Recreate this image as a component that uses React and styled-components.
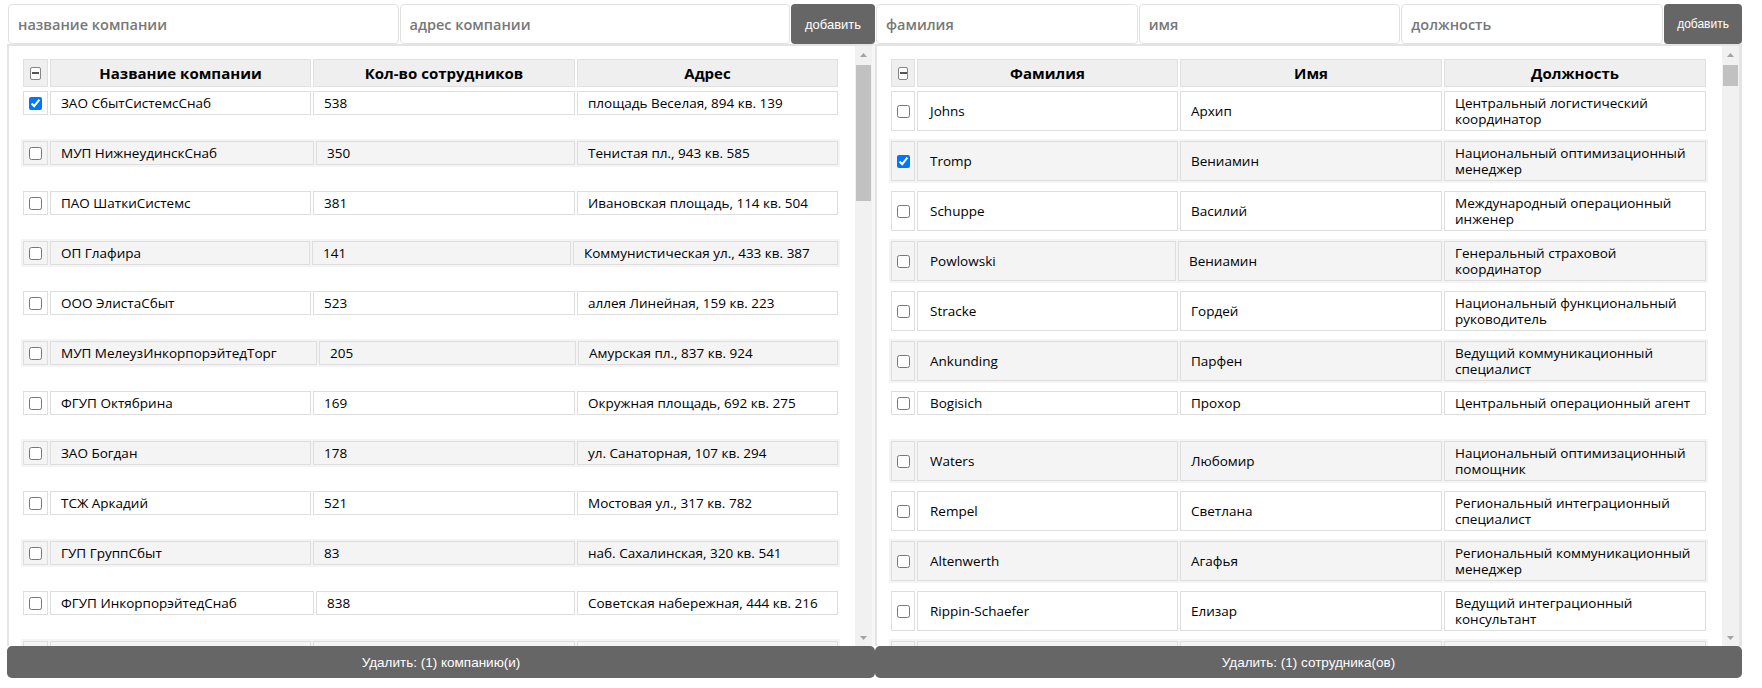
import React from 'react';
import styled, { createGlobalStyle } from 'styled-components';

const GlobalStyle = createGlobalStyle`
  body {
    margin: 0;
    background: #fff;
    font-family: 'Open Sans', 'Noto Sans', sans-serif;
    color: #000;
  }
`

const Page = styled.div`
  display: flex;
  padding: 4px 0 0 7px;
`
const Section = styled.div`
  width: ${p => p.$width}px;
  display: flex;
  flex-direction: column;
`
const Form = styled.form`
  display: flex;
  height: 40px;
  padding-left: 1px;
`
const Input = styled.input`
  flex: 1;
  min-width: 0;
  height: 40px;
  box-sizing: border-box;
  margin: 0 1px 0 0;
  border: 1px solid #e2e2e2;
  border-radius: 4px;
  padding: 0 9px;
  font: 600 14.5px 'Open Sans', sans-serif;
  outline: none;
  &::placeholder {
    color: #777;
  }
`
const AddButton = styled.button`
  width: ${p => p.$width}px;
  flex: none;
  border: none;
  border-radius: 4px;
  background: #666;
  color: #fff;
  font: ${p => p.$size}px 'Liberation Sans', Arial, sans-serif;
  padding: 0;
`
const Panel = styled.div`
  height: 602px;
  box-sizing: border-box;
  display: flex;
  border: 2px solid #e4e4e4;
  border-bottom: none;
  border-right: 3px solid ${p => (p.$last ? '#e4e4e4' : '#f7f7f7')};
  overflow: hidden;
`
const Content = styled.div`
  flex: 1;
  overflow: hidden;
  padding: 11px 0 0 12px;
`
const RowTable = styled.div`
  display: grid;
  grid-template-columns: ${p => p.$cols};
  gap: 2px;
  padding: 2px;
  width: max-content;
  background: ${p => (p.$alt ? '#f4f4f4' : '#fff')};
`
const Slot = styled.div`
  height: 50px;
`
const Cell = styled.div`
  border: 1px solid #dedede;
  background: ${p => (p.$alt ? '#f4f4f4' : '#fff')};
  padding: 3px 10px 3px ${p => p.$pad}px;
  min-height: 16px;
  font-size: 13.5px;
  line-height: 16px;
  display: flex;
  align-items: center;
  white-space: pre-line;
`
const CheckCell = styled(Cell)`
  padding: 0;
  justify-content: center;
`
const HeadCell = styled.div`
  border: 1px solid #e0e0e0;
  background: #efefef;
  padding: 3px 6px;
  font-size: 15px;
  font-weight: 700;
  line-height: 20px;
  text-align: center;
  display: flex;
  align-items: center;
  justify-content: center;
`
const Check = styled.input`
  margin: 0;
  width: 13px;
  height: 13px;
`
const Mixed = styled.span`
  width: 11px;
  height: 11px;
  border: 1px solid #858585;
  border-radius: 2px;
  background: #fff;
  display: flex;
  align-items: center;
  justify-content: center;
  &::after {
    content: '';
    width: 7px;
    height: 1.5px;
    background: #555;
  }
`
const Scrollbar = styled.div`
  width: 17px;
  flex: none;
  background: #f1f1f1;
  display: flex;
  flex-direction: column;
`
const Arrow = styled.div`
  height: 17px;
  flex: none;
  display: flex;
  align-items: center;
  justify-content: center;
`
const Thumb = styled.div`
  height: ${p => p.$h}px;
  margin: 2px 1px 0;
  background: #c1c1c1;
`
const Track = styled.div`
  flex: 1;
`
const DeleteButton = styled.button`
  height: 32px;
  border: none;
  border-radius: 5px;
  background: #666;
  color: #fff;
  font: 13.5px 'Liberation Sans', Arial, sans-serif;
  padding: 0;
`

const LEFT = '25px 261px 262px 261px'
const RIGHT = '24px 261px 262px 262px'

// column widths per row follow the reference, where every row is its own table
const companies = [
  { cells: ['ЗАО СбытСистемсСнаб', '538', 'площадь Веселая, 894 кв. 139'], checked: true },
  { cells: ['МУП НижнеудинскСнаб', '350', 'Тенистая пл., 943 кв. 585'], cols: '25px 264px 259px 261px' },
  { cells: ['ПАО ШаткиСистемс', '381', 'Ивановская площадь, 114 кв. 504'] },
  { cells: ['ОП Глафира', '141', 'Коммунистическая ул., 433 кв. 387'], cols: '25px 260px 259px 265px' },
  { cells: ['ООО ЭлистаСбыт', '523', 'аллея Линейная, 159 кв. 223'] },
  { cells: ['МУП МелеузИнкорпорэйтедТорг', '205', 'Амурская пл., 837 кв. 924'], cols: '25px 267px 257px 260px' },
  { cells: ['ФГУП Октябрина', '169', 'Окружная площадь, 692 кв. 275'] },
  { cells: ['ЗАО Богдан', '178', 'ул. Санаторная, 107 кв. 294'] },
  { cells: ['ТСЖ Аркадий', '521', 'Мостовая ул., 317 кв. 782'] },
  { cells: ['ГУП ГруппСбыт', '83', 'наб. Сахалинская, 320 кв. 541'] },
  { cells: ['ФГУП ИнкорпорэйтедСнаб', '838', 'Советская набережная, 444 кв. 216'], cols: '25px 264px 259px 261px' },
  { cells: ['', '', ''] },
]

const employees = [
  { cells: ['Johns', 'Архип', 'Центральный логистический\nкоординатор'] },
  { cells: ['Tromp', 'Вениамин', 'Национальный оптимизационный\nменеджер'], checked: true },
  { cells: ['Schuppe', 'Василий', 'Международный операционный\nинженер'] },
  { cells: ['Powlowski', 'Вениамин', 'Генеральный страховой\nкоординатор'], cols: '24px 259px 264px 262px' },
  { cells: ['Stracke', 'Гордей', 'Национальный функциональный\nруководитель'] },
  { cells: ['Ankunding', 'Парфен', 'Ведущий коммуникационный\nспециалист'] },
  { cells: ['Bogisich', 'Прохор', 'Центральный операционный агент'] },
  { cells: ['Waters', 'Любомир', 'Национальный оптимизационный\nпомощник'] },
  { cells: ['Rempel', 'Светлана', 'Региональный интеграционный\nспециалист'] },
  { cells: ['Altenwerth', 'Агафья', 'Региональный коммуникационный\nменеджер'] },
  { cells: ['Rippin-Schaefer', 'Елизар', 'Ведущий интеграционный\nконсультант'] },
  { cells: ['', '', ''] },
]

const Tri = ({ down }) => (
  <svg width="7" height="4" viewBox="0 0 7 4">
    <path d={down ? 'M0 0H7L3.5 4Z' : 'M0 4H7L3.5 0Z'} fill="#a3a3a3" />
  </svg>
)

const ScrollTrack = ({ thumb }) => (
  <Scrollbar>
    <Arrow><Tri /></Arrow>
    <Thumb $h={thumb} />
    <Track />
    <Arrow><Tri down /></Arrow>
  </Scrollbar>
)

const DataTable = ({ cols, heads, rows, pads }) => (
  <Content>
    <RowTable $cols={cols}>
      <HeadCell><Mixed /></HeadCell>
      {heads.map(h => <HeadCell key={h}>{h}</HeadCell>)}
    </RowTable>
    {rows.map((r, i) => {
      const alt = i % 2 === 1
      return (
        <Slot key={i}>
          <RowTable $cols={r.cols || cols} $alt={alt}>
            <CheckCell $alt={alt}>
              <Check type="checkbox" defaultChecked={!!r.checked} />
            </CheckCell>
            {r.cells.map((c, j) => <Cell key={j} $alt={alt} $pad={pads[j]}>{c}</Cell>)}
          </RowTable>
        </Slot>
      )
    })}
  </Content>
)

export default function App() {
  return (
    <Page>
      <GlobalStyle />
      <Section $width={868}>
        <Form onSubmit={e => e.preventDefault()}>
          <Input placeholder="название компании" />
          <Input placeholder="адрес компании" />
          <AddButton $width={84} $size={13}>добавить</AddButton>
        </Form>
        <Panel>
          <DataTable
            cols={LEFT}
            heads={['Название компании', 'Кол-во сотрудников', 'Адрес']}
            rows={companies}
            pads={[10, 10, 10]}
          />
          <ScrollTrack thumb={136} />
        </Panel>
        <DeleteButton>Удалить: (1) компанию(и)</DeleteButton>
      </Section>
      <Section $width={867}>
        <Form onSubmit={e => e.preventDefault()}>
          <Input placeholder="фамилия" />
          <Input placeholder="имя" />
          <Input placeholder="должность" />
          <AddButton $width={78} $size={12}>добавить</AddButton>
        </Form>
        <Panel $last>
          <DataTable
            cols={RIGHT}
            heads={['Фамилия', 'Имя', 'Должность']}
            rows={employees}
            pads={[12, 10, 10]}
          />
          <ScrollTrack thumb={21} />
        </Panel>
        <DeleteButton>Удалить: (1) сотрудника(ов)</DeleteButton>
      </Section>
    </Page>
  )
}
